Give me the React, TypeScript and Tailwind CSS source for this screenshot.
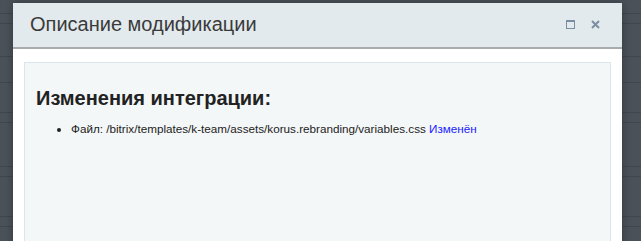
const backRows = [
  { h: 14, text: "" },
  { h: 10, text: "" },
  { h: 33, text: "ан" },
  { h: 26, text: "" },
  { h: 30, text: "ие" },
  { h: 10, text: "" },
  { h: 44, text: "" },
  { h: 10, text: "" },
  { h: 40, text: "ль" },
  { h: 10, text: "" },
  { h: 20, text: "" },
];

export default function App() {
  return (
    <div className="relative h-[241px] w-[641px] overflow-hidden bg-[#4a5158] font-['Liberation_Sans',Arial,sans-serif]">
      {/* darkened page behind the dialog */}
      <div className="flex flex-col">
        {backRows.map((r, i) => (
          <div
            key={i}
            className="flex items-center border-b border-[#40464d] pl-[13px] text-[15px] text-[#2f343a]"
            style={{ height: r.h }}
          >
            {r.text}
          </div>
        ))}
      </div>

      <div className="absolute left-[13px] top-[3px] flex h-[260px] w-[609px] flex-col rounded-t-[2px] bg-white shadow-[0_0_8px_rgba(0,0,0,0.3)]">
        <div className="flex h-[46px] items-center justify-between border-b-2 border-[#a9acad] bg-[#e3eaed] pb-[2px] pl-[17px] pr-[22px]">
          <span className="text-[20px] text-[#3a3a3a]">Описание модификации</span>
          <div className="flex items-center gap-[16px]">
            <svg width="9" height="9" viewBox="0 0 9 9">
              <rect x="0.5" y="0.5" width="8" height="8" fill="none" stroke="#7c8ea2" strokeWidth="1" />
              <rect x="0" y="0" width="9" height="2" fill="#7c8ea2" />
            </svg>
            <svg width="9" height="9" viewBox="0 0 9 9">
              <path d="M1 1L8 8M8 1L1 8" stroke="#7c8ea2" strokeWidth="2" />
            </svg>
          </div>
        </div>
        <div className="flex-1 px-[11px] pt-[13px]">
          <div className="h-full border border-[#dbe6ec] bg-[#f4f7f8] px-[11px] pt-[22px]">
            <h2 className="text-[20px] leading-[26px] font-bold text-[#222]">Изменения интеграции:</h2>
            <ul className="mt-[9px] list-disc pl-[35px] text-[11.7px] text-[#222]">
              <li>
                Файл: /bitrix/templates/k-team/assets/korus.rebranding/variables.css{" "}
                <span className="text-[#2222ff]">Изменён</span>
              </li>
            </ul>
          </div>
        </div>
      </div>
    </div>
  );
}
